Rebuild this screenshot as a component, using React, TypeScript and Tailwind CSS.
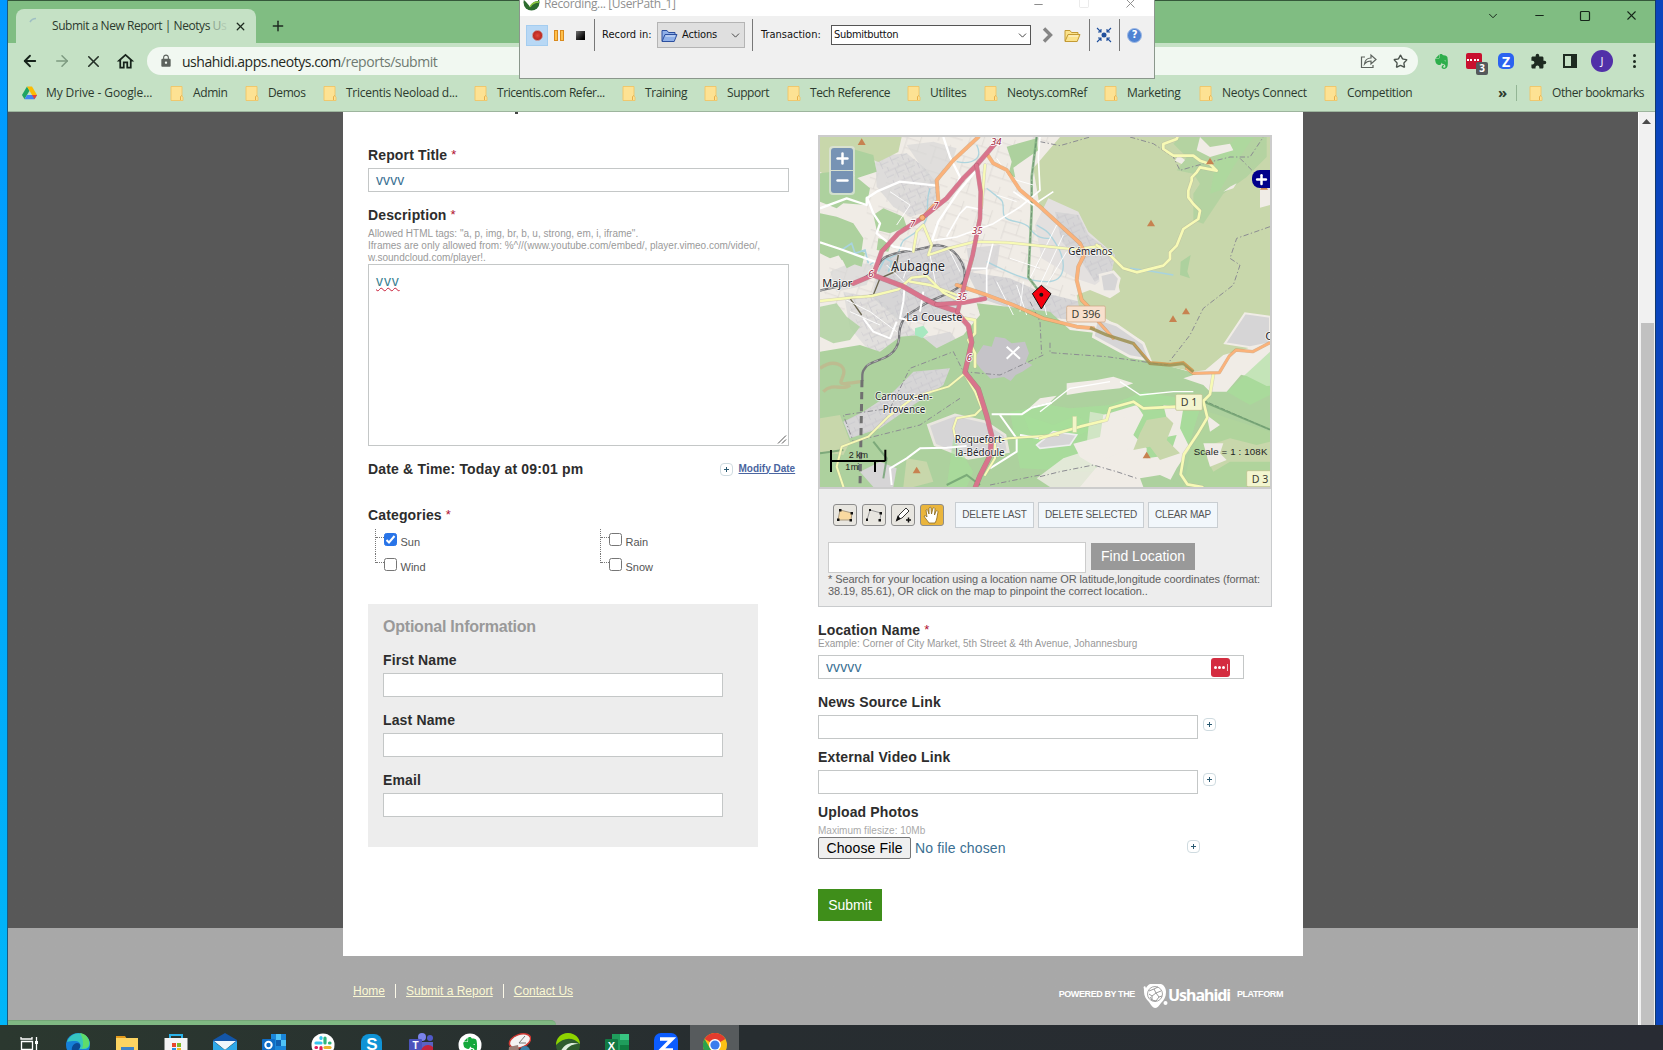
import React from "react";
import { ArrowLeft, ArrowRight, X, Plus, Minus, Square, ChevronDown, Star } from "lucide-react";
import { SiEvernote } from "react-icons/si";
import { MdExtension, MdLock, MdOutlineHome } from "react-icons/md";

const CHROME = "font-['Open_Sans','Noto_Sans',sans-serif]";
const ARIAL = "font-['Liberation_Sans',Arial,sans-serif]";

/* ---------- browser chrome ---------- */

function FolderIcon() {
  return (
    <svg width="14" height="15" viewBox="0 0 14 15" className="shrink-0">
      <path d="M1 .5h11V10l1 1v3.5H1z" fill="#fde293" stroke="#f0c566" strokeWidth=".9" />
      <path d="M10.5 14v-3.5l1.5-1" stroke="#e8b04a" fill="none" />
    </svg>
  );
}

function DriveIcon() {
  return (
    <svg width="15" height="14" viewBox="0 0 15 14" className="shrink-0">
      <path d="M5 .5 0 9l2.5 4.3L7.5 4.8z" fill="#1fa463" />
      <path d="M5 .5h5L15 9h-5z" fill="#fbbc04" />
      <path d="M5 9h10l-2.5 4.3H2.5z" fill="#4285f4" />
      <path d="M15 9h-5l2.5 4.3z" fill="#ea4335" />
    </svg>
  );
}

const BOOKMARKS: [string, string][] = [
  ["My Drive - Google...", "w-[148px] tracking-[-0.1px]"],
  ["Admin", "w-[75px] tracking-[-0.4px]"],
  ["Demos", "w-[78px] tracking-[-0.4px]"],
  ["Tricentis Neoload d...", "w-[151px] tracking-[-0.28px]"],
  ["Tricentis.com Refer...", "w-[148px] tracking-[-0.42px]"],
  ["Training", "w-[82px] tracking-[-0.42px]"],
  ["Support", "w-[83px] tracking-[-0.4px]"],
  ["Tech Reference", "w-[120px] tracking-[-0.42px]"],
  ["Utilites", "w-[77px] tracking-[-0.3px]"],
  ["Neotys.comRef", "w-[120px] tracking-[-0.35px]"],
  ["Marketing", "w-[95px] tracking-[-0.35px]"],
  ["Neotys Connect", "w-[125px] tracking-[-0.26px]"],
  ["Competition", "w-[120px] tracking-[-0.35px]"],
];

function BrowserChrome() {
  return (
    <header className={`h-[112px] shrink-0 bg-[#c5e1c5] text-[#2c3a2e] ${CHROME}`}>
      <div className="flex h-[43px] items-end border-t border-[#35583a] bg-[#80bd82]">
        <div className="ml-2 flex h-[34px] w-[240px] items-center rounded-t-lg bg-[#c5e1c5] pl-3">
          <svg width="16" height="16" viewBox="0 0 16 16" className="-mt-1">
            <path d="M2 6a7 7 0 0 1 6-3.5" fill="none" stroke="#9fbfc4" strokeWidth="1.6" />
          </svg>
          <span className="ml-2 w-[176px] text-[12px] tracking-[-0.45px] whitespace-nowrap">
            Submit a New Report | Neotys <span className="text-[#8fa892]">U<span className="text-[#b0c9b1]">s</span></span>
          </span>
          <X size={13} strokeWidth={2.4} className="ml-1.5 shrink-0 text-[#1e2a20]" />
        </div>
        <Plus size={16} strokeWidth={2.2} className="mb-[9px] ml-[14px] text-[#1e2a20]" />
        <div className="mb-[20px] ml-auto flex items-center gap-[33px] pr-[16px] text-[#16261a]">
          <ChevronDown size={14} strokeWidth={1.7} />
          <Minus size={13} strokeWidth={2} />
          <Square size={12} strokeWidth={2.4} />
          <X size={15} strokeWidth={1.7} />
        </div>
      </div>
      <div className="flex h-[36px] items-center pl-[13px]">
        <ArrowLeft size={18} strokeWidth={2.4} className="text-[#16221a]" />
        <ArrowRight size={18} strokeWidth={2} className="ml-[14px] text-[#7d9a80]" />
        <X size={19} strokeWidth={2} className="ml-[13px] text-[#243027]" />
        <MdOutlineHome size={21} className="ml-[12px] text-[#16221a]" />
        <div className="ml-[11px] flex h-[28px] w-[1271px] items-center rounded-full bg-[#f1f8f1] pl-[12px] text-[14px] tracking-[-0.47px]">
          <MdLock size={14} className="text-[#5c625d]" />
          <span className="ml-[9px] text-[#1f2821]">ushahidi.apps.neotys.com</span>
          <span className="text-[#6f7a71]">/reports/submit</span>
          <svg width="17" height="16" viewBox="0 0 17 16" className="ml-auto" fill="none" stroke="#5c625d" strokeWidth="1.2">
            <path d="M5 4H1.500v10.500H13V12M4.500 11c.5-4 3-6 6.500-6V2l5 4.500-5 4.500V8c-3 0-5 1-6.500 3z" />
          </svg>
          <Star size={15} strokeWidth={2.2} className="mr-[10px] ml-[16px] text-[#4c544e]" />
        </div>
        <SiEvernote size={15} className="ml-[16px] text-[#2dae4b]" />
        <div className="relative ml-[17px] size-[16px] rounded-[2px] bg-[#c8102e]">
          <div className="mt-[6px] ml-[1px] w-[12px] border-t-2 border-dotted border-white" />
          <span className="absolute top-[9px] left-[10px] flex h-[13px] w-[12px] items-center justify-center rounded-[2px] bg-[#55595b] text-[10px] font-bold text-white">3</span>
        </div>
        <div className="ml-[16px] flex size-[16px] items-center justify-center rounded-[5px] bg-[#2b63f0] text-[14px] font-bold text-white">Z</div>
        <MdExtension size={17} className="ml-[16px] text-[#1d2a20]" />
        <div className="ml-[16px] flex h-[14px] w-[14px] justify-end border-2 border-[#1d2a20]">
          <div className="h-full w-[4px] bg-[#1d2a20]" />
        </div>
        <div className="ml-[14px] flex size-[22px] items-center justify-center rounded-full bg-[#5130a8] text-[11px] text-white">J</div>
        <div className="ml-[20px] flex flex-col gap-[2.5px]">
          <i className="size-[3px] rounded-full bg-[#1d2a20]" />
          <i className="size-[3px] rounded-full bg-[#1d2a20]" />
          <i className="size-[3px] rounded-full bg-[#1d2a20]" />
        </div>
      </div>
      <div className="flex h-[33px] items-center border-b border-[#9db59e] pb-[4px] pl-[14px] text-[12px] whitespace-nowrap">
        {BOOKMARKS.map(([name, cls], i) => (
          <div key={name} className={`flex shrink-0 items-center ${cls}`}>
            {i === 0 ? <DriveIcon /> : <FolderIcon />}
            <span className="ml-[9px]">{name}</span>
          </div>
        ))}
        <span className="-mt-[2px] ml-[54px] w-[18px] text-[15px] leading-none font-bold">»</span>
        <div className="h-[16px] w-px bg-[#93b595]" />
        <div className="ml-[12px] flex items-center tracking-[-0.43px]">
          <FolderIcon />
          <span className="ml-[9px]">Other bookmarks</span>
        </div>
      </div>
    </header>
  );
}

/* ---------- floating recorder toolbar ---------- */

function OpenFolder({ fill, dark }: { fill: string; dark: string }) {
  return (
    <svg width="17" height="15" viewBox="0 0 17 15" className="shrink-0">
      <path d="M1 13V2.500h5l1.500 2H14V7" fill={fill} stroke={dark} />
      <path d="M1 13.500 4 6.500h12l-2.800 7z" fill={fill} stroke={dark} />
      <path d="M4.500 8h9.500" stroke="#fff" opacity=".7" />
    </svg>
  );
}

function Recorder() {
  return (
    <div className="absolute top-0 left-[519px] z-10 h-[79px] w-[636px] border border-t-0 border-[#8b978c] bg-[#f0f0f0] font-['DejaVu_Sans_Condensed','DejaVu_Sans',sans-serif] text-[11px] text-[#111]">
      <div className="flex h-[16px] items-start bg-white">
        <svg width="17" height="11" viewBox="0 0 17 11" className="ml-[3px] shrink-0">
          <circle cx="8.5" cy="2.5" r="8" fill="#2c6b2f" />
          <path d="M1 0c3 3 5 5 6 7 1-3 4-6 8-6v-2H1z" fill="#fff" />
          <path d="M7 7c2-4 5-5 9-5" stroke="#8cc63f" fill="none" strokeWidth="1.5" />
        </svg>
        <span className={`-mt-[4px] ml-[4px] text-[12px] leading-[15px] tracking-[-0.35px] text-[#8f8f8f] ${CHROME}`}>Recording... [UserPath_1]</span>
        <div className="mr-[16px] ml-auto flex gap-[33px] text-[#8a8a8a]">
          <Minus size={13} strokeWidth={1.8} className="-mt-[2px]" />
          <Square size={12} strokeWidth={1.2} className="-mt-[3px] text-[#ddd]" />
          <X size={15} strokeWidth={1.5} className="-mt-[4px]" />
        </div>
      </div>
      <div className="flex h-[38px] items-center pl-[6px]">
        <div className="flex h-[21px] w-[22px] items-center justify-center border border-[#a4cdf0] bg-[#b8d8f5]">
          <div className="size-[11px] rounded-full border border-[#c78a86] bg-radial from-[#e0483a] to-[#a80f10]" />
        </div>
        <div className="ml-[6px] flex gap-[2px]">
          <i className="h-[11px] w-[4px] border border-[#d98a1e] bg-[#ffc04a]" />
          <i className="h-[11px] w-[4px] border border-[#d98a1e] bg-[#ffc04a]" />
        </div>
        <div className="ml-[12px] size-[9px] bg-linear-to-br from-[#777] to-black" />
        <div className="ml-[9px] h-[32px] w-px bg-[#777]" />
        <span className="ml-[7px] w-[55px]">Record in:</span>
        <div className="flex h-[26px] w-[88px] items-center border border-[#b4b4b4] bg-[#dfdfdf] pl-[3px]">
          <OpenFolder fill="#8fb0e8" dark="#2c4f9e" />
          <span className="ml-[4px] tracking-[-0.15px]">Actions</span>
          <ChevronDown size={13} strokeWidth={1.8} className="mr-[2px] ml-auto text-[#444]" />
        </div>
        <div className="ml-[7px] h-[32px] w-px bg-[#777]" />
        <span className="ml-[8px] w-[70px]">Transaction:</span>
        <div className="flex h-[20px] w-[200px] items-center justify-between border border-[#555] bg-white pr-[1px] pl-[2px]">
          <span className="tracking-[-0.3px]">Submitbutton</span>
          <ChevronDown size={13} strokeWidth={1.8} className="text-[#444]" />
        </div>
        <svg width="11" height="16" viewBox="0 0 11 16" className="ml-[11px]">
          <path d="M2 1.500 8.500 8 2 14.500" fill="none" stroke="#858585" strokeWidth="3.4" />
        </svg>
        <div className="ml-[11px]"><OpenFolder fill="#fbe28a" dark="#c39a34" /></div>
        <div className="ml-[8px] h-[32px] w-px bg-[#777]" />
        <svg width="16" height="16" viewBox="0 0 16 16" className="ml-[6px]" fill="none" stroke="#1f4f9c" strokeWidth="1.1">
          <circle cx="8" cy="8" r="2.5" fill="#1f4f9c" stroke="none" />
          <path d="M1 1l4 4M5 2v3H2M15 1l-4 4M11 2v3h3M1 15l4-4M2 11h3v3M15 15l-4-4M14 11h-3v3" />
        </svg>
        <div className="ml-[7px] h-[32px] w-px bg-[#777]" />
        <div className="ml-[7px] flex size-[15px] items-center justify-center rounded-full border border-[#9db8e4] bg-[#4f83d3] text-[11px] font-bold text-white">?</div>
      </div>
    </div>
  );
}

/* ---------- map ---------- */

const FOREST = "#add19e";
const SCRUB = "#c8d7ab";
const GRASS = "#a6e09a";
const TOWN = "#d6d5d6";

function Road({ d, c, w, k = "#b9b39a" }: { d: string; c: string; w: number; k?: string }) {
  return (
    <g fill="none" strokeLinejoin="round" strokeLinecap="round">
      <path d={d} stroke={k} strokeWidth={w + 3} opacity=".5" />
      <path d={d} stroke={c} strokeWidth={w} />
    </g>
  );
}

function Place({ x, y, w, s, children }: { x: number; y: number; w: number; s: number; children: string }) {
  return (
    <text x={x} y={y} textLength={w} lengthAdjust="spacingAndGlyphs" fontSize={s} fill="#26262b" stroke="#fff" strokeWidth="5" strokeOpacity=".75" paintOrder="stroke">
      {children}
    </text>
  );
}

function Peak({ x, y }: { x: number; y: number }) {
  return <path d={`M${x} ${y - 10}l12 20h-24z`} fill="#c78250" />;
}

function Shield({ x, y, w, t, o }: { x: number; y: number; w: number; t: string; o?: boolean }) {
  return (
    <g>
      <rect x={x} y={y} width={w} height="48" rx="4" fill={o ? "#f8e0cd" : "#f3f5cf"} stroke={o ? "#c9a27f" : "#b9bc8a"} strokeWidth="2" />
      <text x={x + w / 2} y={y + 36} textAnchor="middle" fontSize="32" fill="#3d3d33">{t}</text>
    </g>
  );
}

function MapView() {
  const yellow = "#f7fab5";
  const mw = "#d9748c";
  const org = "#fbb27a";
  return (
    <svg width="450" height="350" viewBox="30 36 1350 1050" className="block font-['Noto_Sans',sans-serif]">
      <defs>
        <pattern id="lots" width="34" height="42" patternUnits="userSpaceOnUse" patternTransform="rotate(-24)">
          <path d="M0 12h34M10 12v30M24 0v12M10 28h24" stroke="#c2c1c8" strokeWidth="1.5" fill="none" />
        </pattern>
        <pattern id="fields" width="90" height="74" patternUnits="userSpaceOnUse" patternTransform="rotate(18)">
          <path d="M0 20h60M60 0v50M20 50h70M20 20v54" stroke="#d2cdc9" strokeWidth="1.5" fill="none" />
        </pattern>
      </defs>
      <rect x="30" y="36" width="1350" height="1050" fill="#f0ece6" />
      {/* farmland and built-up areas */}
      <path d="M190 36H730L720 170 850 350 780 560 520 530 440 660 180 640 90 560 40 500 60 420 160 380z" fill="url(#fields)" />
      <path d="M195 95l95-10 50 40 50 60-20 70-70 20-50-30-50-60z" fill={TOWN} opacity=".7" />
      <path d="M290 60l80-10 70 20-20 60-50 50-40-60zM60 440l70-30 60 10-20 60-90 20z" fill={TOWN} opacity=".6" />
      <path d="M215 395l170-40 80 60 10 90-60 80-150 0-80-70z" fill={TOWN} />
      <path d="M470 440l130 20 90 40 120 30 20 60-170-20-150-50z" fill={TOWN} />
      <path d="M470 370l100-10-10 70-80 10zM720 60l40 60-30 60-12-40zM330 640l90-20 40 50-60 60-100-20z" fill={TOWN} opacity=".8" />
      <path d="M100 500l100 20 70 50 60 70-60 60-90-20-60-70z" fill={TOWN} opacity=".55" />
      <path d="M195 95l95-10 50 40 50 60-20 70-70 20zM215 395l170-40 80 60 10 90-60 80-150 0zM470 440l130 20 90 40 120 30 20 60-170-20zM100 500l100 20 70 50 60 70-60 60-90-20z" fill="url(#lots)" />
      {/* northern and western woods */}
      <path d="M30 36h245l-10 45-60 30-50-20-20 60-60 10-45-20z" fill={SCRUB} />
      <path d="M30 145l80-10 40 30 30 25-10 50-70-5-20 15-50-20zM120 70l70 20 10 50-60 20-30-40zM190 270l30-20 60 25 10 30-50 20-40-10z" fill={FOREST} />
      <path d="M30 265l50 10 50 20 30 45-10 70-40 20-20-40-30 10-30-15zM55 345l60 10 50 30-10 40-60-20zM205 340l40 10-10 30-35-5z" fill={FOREST} />
      <path d="M590 65l90-25 10 90-10 80-35-10-20-40-30-10 10-40zM640 200l40-10 10 60-30 10z" fill={FOREST} />
      <path d="M30 545l50-10 30 40 40 30-30 40-50 10-40-20z" fill={FOREST} opacity=".8" />
      {/* southern forest */}
      <path d="M30 680l120-20 60 20 60-45 60-5 50 40 80-40 50-60-10-35 220 25 60 55 130 15 60 20 120 5 20 60 110 18 90 20 60 30 110-10 110-50V1086H30z" fill={FOREST} />
      {/* eastern scrub */}
      <path d="M742 36H1380V690l-120 48-110 5-110-30-30-40-80-45-60-40-50-40 20-30 40-20-20-60-120-60-100-100-30-150z" fill="#f0ece6" />
      <path d="M750 36H1380V655l-60 10-60 60-110 15-140-30-10-60-130-80-60-10-10-50 40-15 60 25 30-20-10-40-40-20-30-40-20-30-20-70-60-30-60-20-20-120z" fill={SCRUB} />
      <path d="M1110 36h260v60l-60 60-70 50-60 90-30-10 0-80 20-30-20-30-50-10 30-40-40-40z" fill={FOREST} opacity=".75" />
      <path d="M1220 100l60-64h50l-60 90-40 70-30 10z" fill={GRASS} opacity=".4" />
      <path d="M1170 36l30 30 60-10 10 20-70 20-40-20zM1105 90l20 15-10 12-20-10zM1260 185l20-10-10 15-30 10zM1350 190l30-10v60l-30 8z" fill="#f0ece6" />
      <path d="M1112 410l30-20-10 50 8 20-30-10z" fill={FOREST} />
      {/* Gémenos */}
      <path d="M715 220l90 40 30 60 80 70-10 50-50 40-60-20-100-60-20-100z" fill="#e3e0df" />
      <path d="M735 260l70 10 30 60 80 60-10 50-50 30-40-60-60-60z" fill={TOWN} />
      <path d="M735 260l70 10 30 60 80 60-10 50-50 30-40-60-60-60z" fill="url(#lots)" />
      <path d="M870 450l40-10 18 20-10 40-40 0zM860 580l60 20 80 55 20 50-60-10-110-60z" fill={TOWN} stroke="#f0ece6" strokeWidth="8" />
      <path d="M1245 655l60-90 75 10v80l-60 12z" fill={TOWN} stroke="#f0ece6" strokeWidth="6" />
      {/* clearings and villages in the south */}
      <path d="M500 690l20-30 25 5 10-30 30 5 20 15 40-5 12 35-10 25 20 10-30 20-20 10-15 18-20-12-40 5-30-30-15-20z" fill="#c5c3c8" />
      <path d="M590 665l40 36M628 665l-38 36" stroke="#fff" strokeWidth="6" />
      <path d="M100 890l60-30 90-60 60-60 110-10-20 50-90 60-100 70-90 30z" fill={TOWN} />
      <path d="M100 890l60-30 90-60 60-60 110-10-20 50-90 60-100 70-90 30z" fill="url(#lots)" />
      <path d="M355 900l80-30 90 20 60 40 10 50-120 20-100-40z" fill={TOWN} stroke="#e9e6df" strokeWidth="8" />
      <path d="M150 1040l60-30 50 20-10 56h-60z" fill={TOWN} />
      <path d="M30 730c40-30 80-10 70 20s-20 30 50 20M40 800c30-30 60 0 80-20" stroke="#c3b38a" strokeWidth="10" fill="none" opacity=".7" />
      <path d="M30 880l60-10 30 80-20 40-70-10zM290 1000l60 10 20 60-60 16h-30z" fill={SCRUB} />
      <path d="M315 610l25-8 15 20-18 18-22-10z" fill="#a8e8c0" />
      <path d="M600 860l120-20 60 10 120-10 100-40 110 20 60 30-30 100-60 50-100 20-150 20-200-10z" fill={GRASS} opacity=".65" />
      <path d="M640 870l90 30 70-30 50 40-80 40-100 0zM430 940l60 100-20 46h-60z" fill={GRASS} opacity=".6" />
      <path d="M770 775l90-10 50-10 60 20-40 15-100 10-60 10zM690 820l50-8-20 20-60 15z" fill="#f0ece6" />
      <path d="M880 870l100-30 20 30-30 60 40 40 0 30 70-10 20-60-50 10-20-30 40-30-10-40 60 10-10 60 30 60-40 60-30 56-260 0 50-60-50-30-20-40 80-20z" fill="#f0ece6" />
      <path d="M840 860l-10 100 60 40 90-40-30-80z" fill="#f0ece6" opacity=".55" />
      <path d="M1010 885l60-10 20 20-20 50 40 40-60 20-30-40-50 10 20-50z" fill={SCRUB} />
      <path d="M680 960l50-40 70 10-20 30-90 10z" fill={TOWN} stroke="#eee" strokeWidth="5" />
      <path d="M680 1060l80-60 60-20 40 50-20 56h-120z" fill="#f0ece6" opacity=".8" />
      <path d="M990 1060l60-10 80 36h-130z" fill={FOREST} />
      <path d="M1180 740l60-50 110-30-40 70-60 70-50 0-20-20-60-20z" fill="#f0ece6" />
      <path d="M1250 800l130-120v130l-60 30z" fill={GRASS} opacity=".6" />
      <path d="M1195 860l185 60v166h-260l20-100z" fill="#b0d49c" />
      <path d="M1200 960l60-20 80 20 40-10v60l-120 0-50 30-20-40z" fill={SCRUB} />
      <path d="M1180 955l60 0-10 30 20 20-50 20zM1190 870l40 30-30 20z" fill="#f0ece6" />
      {/* water */}
      <path d="M530 190c50 40 50 30 50 70s60 20 80 50 40 30 60 30M500 60c20 40-10 60-60 50M360 190c-20 60 10 80-30 120s-50 20-60 60-80 30-90 50M530 410c60 30 120 60 180 60s60-60 30-110-30-40-60-60" fill="none" stroke="#9fd0dc" strokeWidth="4" opacity=".8" />
      <path d="M95 375l30-20 10 30 30-10 10 40M960 430l60 8 70 12M205 440l20-40 20 10-10 30" fill="none" stroke="#a8d3de" strokeWidth="5" />
      {/* railway and boundaries */}
      <path d="M30 497c80-20 140-20 180-85 20-35 100-30 160-50 60-10 105 60 92 105-20 40-100 50-140 85-40 20-55 40-55 90-10 70-90 60-100 85-12 15-10 20-10 40" fill="none" stroke="#77777a" strokeWidth="7" />
      <path d="M30 497c80-20 140-20 180-85 20-35 100-30 160-50 60-10 105 60 92 105-20 40-100 50-140 85-40 20-55 40-55 90-10 70-90 60-100 85" fill="none" stroke="#d5d5d5" strokeWidth="2" strokeDasharray="14 10" />
      <path d="M156 765l-6 320" stroke="#707070" strokeWidth="9" strokeDasharray="22 14" />
      <path d="M265 390l-10 50-45 20-20 50-70 10 35 50" fill="none" stroke="#6b6650" strokeWidth="4" />
      <path d="M680 36l-15 120 0 100-10 200 45 60" fill="none" stroke="#7eb07e" strokeWidth="8" opacity=".8" />
      <path d="M680 36l-15 120 0 100-10 200 45 60M1180 826l200 88" fill="none" stroke="#6b8f70" strokeWidth="2.5" strokeDasharray="14 5" />
      <path d="M30 985l70-10M190 950l40 50-10 60M410 1080l60-30 40 30M1180 830l200 84" fill="none" stroke="#6f9f70" strokeWidth="6" opacity=".8" />
      <g fill="none" stroke="#8c8c92" strokeWidth="3" strokeDasharray="16 7 4 7">
        <path d="M690 50l60 12 90-26M960 36l70 20 60 40 20 40 70-20 80-20 60 0 40-60M1290 100l40 40" />
        <path d="M1380 305l-100 35-20 60 30 20-20 60-90 70-40 80-70 90-180-25-170-12 0-30" />
        <path d="M700 690l-130 60-110-10-30-60-130 50-60 120-140 20 30 80 200-50 120-80" />
        <path d="M660 530l30 60 5 100M690 1055l60-15 100-20 70 20 60 20M540 1080l150-30" />
      </g>
      {/* minor roads */}
      <g fill="none" stroke="#fff" strokeWidth="7" strokeLinejoin="round">
        <path d="M30 250l80-30 60 20 0-20 30-20 70-30 110 12M170 215l20 50 20 30-10 30 50 40 60 10M30 352l60 20 110 40M400 36l20 60 30 60-15 40M365 350l20-60 60-90 50-60" />
        <path d="M690 36l-5 60 5 100-60 50-80 50-110 40-70 10M520 255l-50-10-20 20-40 70M550 350l-20 80M480 430h50l0 90M610 200l60 40 60-40" strokeWidth="5" />
        <path d="M285 470l-5 60-10 50 50 10M340 500l-10 60M160 580l30 40 50 20 20-50M245 1080l-5-50 50-30 40-30 80-2 60-5M545 868l90 0 30-20 60-15M570 870l50 70 0 40-80 50M690 940l-60-10" strokeWidth="6" />
        <path d="M690 860l90-70 120-20M930 770l60 40 100-10 60 0" strokeWidth="4" />
      </g>
      <g fill="none" stroke="#fff" strokeWidth="3" opacity=".9">
        <path d="M560 100l40 60 70 20M560 210l60 20M740 300l-80 160M760 330l-70 150M770 380l-60 100M600 400l90 30M560 470l50 100M620 480l30 90M420 380l30 60M260 300l40-60-60-40M100 520l80 40 80 60M120 560l90 40M230 420l60 60M300 400l-20 60M360 390l20 100M640 470l-10 90M690 490l20 80" />
      </g>
      {/* secondary roads */}
      <Road c={yellow} w={7} d="M30 528l95-10 60-5 80-20 40-35 45-5 50 50 40 20M310 380l10-60 20-20 25 60-10 30M355 390l60-20 80-20 100 3 200 20 75-10M525 120l-10 120-30 170-25 80M300 470l60 10 80 30" />
      <Road c={yellow} w={6} d="M465 745l-50 40-100 30-80 60-60 60-80 30-15 60 20 60M465 750l30 50 20 50-20 20-55 10-10 30 5 25 100 20 60-15 150-10M525 1050l30-50 0-60" />
      <Road c={yellow} w={8} d="M690 940l120-35 80-20 10-35 70-20 30 20 100-5M860 360l40 30 40 40 40 12 80-20 20-20 0-20 20-20 20-50 45-30 5-25-20-20-15-20 0-20 10-30 0-10 15-15 10-15 50 10-20-20-30-10-20-15-60 0-30-20 0-15 40-15 20-55-10-5h65" />
      <Road c={yellow} w={8} d="M1210 748l-10 60-20 20 12 50-30 50-40 60-10 60 20 30 45 8M465 580l30 5 0 40-20 20 20 40 0 40" />
      {/* primary roads */}
      <Road c={org} w={9} k="#c2803f" d="M505 36l-75 70-50 60 5 60-45 50M530 85l20 30 40 20 40 60 60 50 120 110 15 30-20 40-5 40 15 60 20 20M440 480l90 30 80 30 90 40 100 25 50 5" />
      <Road c={org} w={7} k="#c2803f" d="M865 590l45 50M1130 730l20 15 78-2 30-50 20-18 50 5 50-26" />
      <path d="M840 608l50 22 80 25 50 60 60 5 40-5 30 25" fill="none" stroke="#9c8f50" strokeWidth="10" opacity=".85" />
      <path d="M970 655l50 55 60 5 40-5 30 25" fill="none" stroke="#d89a50" strokeWidth="4" opacity=".8" />
      {/* motorways */}
      <Road c={mw} w={12} k="#a04860" d="M560 50l-60 70-40 40-50 60-75 60-70 45-50 55-25 70-60 25" />
      <Road c={mw} w={13} k="#a04860" d="M195 452l80 30 70 40 30 15 60 20 40 45 10 50-20 90 40 50 25 80 15 60-5 60-30 60-15 38" />
      <Road c={mw} w={11} k="#a04860" d="M500 120l12 80-2 80-22 110-25 90-20 80M380 538l80-5 65-12" />
      <circle cx="337" cy="278" r="8" fill={org} stroke="#c2803f" strokeWidth="2" />
      {([["34", 543, 60], ["7", 370, 253], ["7", 300, 305], ["35", 486, 326], ["6", 175, 457], ["35", 440, 526], ["6", 470, 708]] as [string, number, number][]).map(([t, x, y], i) => (
        <text key={i} x={x} y={y} fontSize="28" fontStyle="italic" fill="#9a1838" stroke="#fff" strokeWidth="5" paintOrder="stroke">{t}</text>
      ))}
      <Peak x={155} y={50} /><Peak x={1023} y={294} /><Peak x={1128} y={558} /><Peak x={1089} y={581} />
      <Peak x={1200} y={108} /><Peak x={320} y={1035} /><Peak x={1010} y={990} /><Peak x={1362} y={184} />
      <Place x={243} y={438} w={162} s={41}>Aubagne</Place>
      <Place x={37} y={485} w={90} s={32}>Major</Place>
      <Place x={289} y={588} w={168} s={32}>La Coueste</Place>
      <Place x={775} y={390} w={132} s={31}>Gémenos</Place>
      <Place x={195} y={825} w={172} s={31}>Carnoux-en-</Place>
      <Place x={218} y={863} w={128} s={31}>Provence</Place>
      <Place x={434} y={954} w={150} s={31}>Roquefort-</Place>
      <Place x={436} y={993} w={148} s={31}>la-Bédoule</Place>
      <Place x={1366} y={646} w={22} s={31}>C</Place>
      <Shield x={770} y={543} w={116} t="D 396" o />
      <Shield x={1097} y={808} w={80} t="D 1" />
      <Shield x={1310} y={1037} w={80} t="D 3" />
      <rect x="788" y="874" width="12" height="48" fill="#f3f5c8" stroke="#c9cc9a" />
      {/* marker */}
      <path d="M694 481l29 25-29 46-27-46z" fill="#f5000f" stroke="#111" strokeWidth="3" />
      <circle cx="694" cy="509" r="6" fill="#111" />
      {/* scale bar */}
      <path d="M63 975v66M63 1008h163M226 974v34M195 1010v31" stroke="#000" strokeWidth="6" fill="none" />
      <g className="font-['Liberation_Sans',sans-serif]" fill="#222">
        <text x="116" y="999" fontSize="27" textLength="58">2 km</text>
        <text x="106" y="1035" fontSize="27" textLength="42">1 mi</text>
        <text x="1151" y="990" fontSize="29" textLength="221">Scale = 1 : 108K</text>
      </g>
    </svg>
  );
}

/* ---------- form pieces ---------- */

function Label({ children, req, cls }: { children: string; req?: boolean; cls: string }) {
  return (
    <div className={`flex shrink-0 items-center text-[14px] leading-[16px] font-bold tracking-[0.14px] text-[#2d2d2d] ${cls}`}>
      <span>{children}</span>
      {req && <span className="ml-[4px] text-[13px] font-normal text-[#b01030]">*</span>}
    </div>
  );
}

function Field({ cls, children }: { cls: string; children?: React.ReactNode }) {
  return (
    <div className={`flex h-[24px] shrink-0 items-center border border-[#c4c7c7] bg-white text-[14px] text-[#3a6f92] ${cls}`}>{children}</div>
  );
}

function AddIcon() {
  return (
    <span className="flex size-[13px] shrink-0 items-center justify-center rounded-[4px] border border-[#cfdbe0] text-[#2a5a72]">
      <svg width="5" height="5" viewBox="0 0 5 5"><path d="M2.500 0v5M0 2.500h5" stroke="currentColor" /></svg>
    </span>
  );
}

function Check({ label, on, last }: { label: string; on?: boolean; last?: boolean }) {
  return (
    <div className="flex h-[25px] text-[11px] text-[#555]">
      <div className={`w-[9px] border-l border-dotted border-[#777] ${last ? "h-[9px]" : "h-[25px]"}`}>
        <div className="h-[9px] border-b border-dotted border-[#777]" />
      </div>
      <div className={`mt-[4px] flex size-[13px] items-center justify-center rounded-[2.5px] border ${on ? "border-[#2874e8] bg-[#2874e8]" : "border-[#767676] bg-white"}`}>
        {on && <svg width="11" height="11" viewBox="0 0 11 11"><path d="M1.500 6l2.500 2.500L9.500 2" stroke="#fff" strokeWidth="2" fill="none" /></svg>}
      </div>
      <span className="mt-[5px] ml-[3.5px] leading-[16px]">{label}</span>
    </div>
  );
}

function LeftColumn() {
  return (
    <div className="flex w-[450px] shrink-0 flex-col pt-[35px]">
      <Label req cls="h-[16px]">Report Title</Label>
      <Field cls="mt-[5px] w-[421px] pl-[7px]"><span className="tracking-[0.1px]">vvvv</span></Field>
      <Label req cls="mt-[15px] h-[16px]">Description</Label>
      <div className="mt-[5px] text-[10px] leading-[12px] whitespace-nowrap text-[#9a9a9a]">
        <p>Allowed HTML tags: "a, p, img, br, b, u, strong, em, i, iframe".</p>
        <p>Iframes are only allowed from: %^//(www.youtube.com/embed/, player.vimeo.com/video/,</p>
        <p>w.soundcloud.com/player!.</p>
      </div>
      <div className="flex h-[182px] w-[421px] shrink-0 items-start justify-between border border-[#c4c7c7] pl-[7px]">
        <span className="mt-[8px] text-[14px] leading-[16px] tracking-[0.9px] text-[#3a7f92] underline decoration-[#c8203a] decoration-wavy decoration-1 underline-offset-[1px]">vvv</span>
        <svg width="10" height="10" viewBox="0 0 10 10" className="mr-px mb-px self-end"><path d="M1 9.500 9 1.500M5 9.500l4-4" stroke="#555" /></svg>
      </div>
      <div className="mt-[15px] flex h-[16px] items-center">
        <Label cls="w-[352px] tracking-[0.17px]">Date &amp; Time: Today at 09:01 pm</Label>
        <AddIcon />
        <span className="-mt-[2px] ml-[5.5px] text-[10px] font-bold whitespace-nowrap text-[#4a65a0] underline">Modify Date</span>
      </div>
      <Label req cls="mt-[30px] h-[16px]">Categories</Label>
      <div className="mt-[6px] flex h-[50px] shrink-0 pl-[7px]">
        <div className="w-[225px]">
          <Check label="Sun" on />
          <Check label="Wind" last />
        </div>
        <div>
          <Check label="Rain" />
          <Check label="Snow" last />
        </div>
      </div>
      <div className="mt-[25px] flex h-[243px] w-[390px] shrink-0 flex-col bg-[#ededed] pl-[15px]">
        <p className="mt-[14px] h-[18px] text-[16px] leading-[18px] font-bold tracking-[-0.22px] text-[#999]">Optional Information</p>
        <Label cls="mt-[16px] h-[16px]">First Name</Label>
        <Field cls="mt-[5px] w-[340px]" />
        <Label cls="mt-[15px] h-[16px]">Last Name</Label>
        <Field cls="mt-[5px] w-[340px]" />
        <Label cls="mt-[15px] h-[16px]">Email</Label>
        <Field cls="mt-[5px] w-[340px]" />
      </div>
    </div>
  );
}

function Tool({ on, children }: { on?: boolean; children: React.ReactNode }) {
  return (
    <div className={`flex h-[22px] w-[24px] items-center justify-center rounded-[3px] border border-[#8d8d8d] ${on ? "bg-[#eab53c]" : "bg-[#e8e6e0]"}`}>
      <svg width="20" height="18" viewBox="0 0 20 18" fill="none" stroke="#333">{children}</svg>
    </div>
  );
}

function RightColumn() {
  return (
    <div className="flex w-[454px] shrink-0 flex-col pt-[23px]">
      <div className="relative shrink-0 border-2 border-[#ccc]">
        <MapView />
        <div className="absolute top-[9px] left-[9px] flex flex-col gap-px rounded-[4px] bg-[#dfe6df]/70 p-[2px] text-white">
          <div className="flex h-[22px] w-[22px] items-center justify-center rounded-t-[3px] bg-[#7793b4] pb-[2px]"><Plus size={17} strokeWidth={3.5} /></div>
          <div className="flex h-[22px] w-[22px] items-center justify-center rounded-b-[3px] bg-[#7793b4] pb-[3px]"><Minus size={17} strokeWidth={3.5} /></div>
        </div>
        <div className="absolute top-[33px] right-0 flex h-[18px] w-[18px] items-center justify-center rounded-l-[8px] bg-[#00008b] text-white">
          <Plus size={15} strokeWidth={4} />
        </div>
      </div>
      <div className="h-[118px] shrink-0 border border-t-0 border-[#c9cbcd] bg-[#ededed] pt-[13px] pl-[9px]">
        <div className="flex items-center gap-[5px] pl-[5px] text-[10px] text-[#555]">
          <Tool>
            <path d="M5 4l12 3-1 7-13 0z" fill="#f9d9a0" stroke="#a99a80" />
            <path d="M4 3h2.500v2.500H4zM15.500 6H18v2.500h-2.500zM14.500 13H17v2.500h-2.500zM2 12.500h2.500V15H2z" fill="#111" stroke="none" />
          </Tool>
          <Tool>
            <path d="M3 14L6 4l11 3-1 7" stroke="#999" />
            <path d="M5 3h2v2H5zM15.500 6H18v2.500h-2.500zM14.500 13H17v2.500h-2.500zM2 12.500h2V15H2z" fill="#111" stroke="none" />
          </Tool>
          <Tool>
            <path d="M4 14l2-5 7-7 3 3-7 7z" fill="#fff" /><path d="M4 14l1-3 1.500 1.500zM13 14h5M15.500 11.500v5" stroke="#111" strokeWidth="1.5" />
          </Tool>
          <Tool on>
            <path d="M7 17c-2-3-4-5-5-7 1-1 2 0 3 1L4 4c1-1 2 0 2 1l1 3V2c1-1 2-1 2 0l.5 6L11 2c1-1 2 0 2 1l-.5 6L14 5c1-1 2 0 2 1-1 4-1 8-3 11z" fill="#fff" stroke="#8a6a20" strokeWidth=".8" />
          </Tool>
          <div className="ml-[6px] flex gap-[4px] whitespace-nowrap">
            <span className="flex h-[26px] w-[79px] items-center justify-center border border-[#c9ced2] bg-[#f2f7fb] pb-px tracking-[-0.22px]">DELETE LAST</span>
            <span className="flex h-[26px] w-[106px] items-center justify-center border border-[#c9ced2] bg-[#f2f7fb] pb-px tracking-[-0.17px]">DELETE SELECTED</span>
            <span className="flex h-[26px] w-[70px] items-center justify-center border border-[#c9ced2] bg-[#f2f7fb] pb-px tracking-[-0.2px]">CLEAR MAP</span>
          </div>
        </div>
        <div className="mt-[14px] flex items-start">
          <div className="h-[31px] w-[258px] border border-[#ccc] bg-white" />
          <div className="mt-px ml-[5px] flex h-[27px] w-[104px] items-center justify-center bg-[#999] text-[14px] text-white">Find Location</div>
        </div>
        <p className="text-[11px] leading-[12px] tracking-[-0.09px] whitespace-nowrap text-[#606060]">
          * Search for your location using a location name OR latitude,longitude coordinates (format:
          <br />
          38.19, 85.61), OR click on the map to pinpoint the correct location..
        </p>
      </div>
      <Label req cls="mt-[15px] h-[16px]">Location Name</Label>
      <p className="h-[12px] text-[10px] leading-[12px] whitespace-nowrap text-[#999]">Example: Corner of City Market, 5th Street &amp; 4th Avenue, Johannesburg</p>
      <Field cls="mt-[5px] w-[426px] justify-between pr-[13px] pl-[7px]">
        <span className="tracking-[0.1px]">vvvvv</span>
        <span className="flex size-[19px] items-center gap-[1px] rounded-[3px] bg-[#d42c40] pl-[3px]">
          <i className="size-[3px] rounded-full bg-white" />
          <i className="size-[3px] rounded-full bg-white" />
          <i className="size-[3px] rounded-full bg-white" />
          <i className="ml-px h-[7px] w-px bg-white/70" />
        </span>
      </Field>
      <Label cls="mt-[15px] h-[16px]">News Source Link</Label>
      <div className="mt-[5px] flex gap-[5px]">
        <Field cls="w-[380px]" />
        <div className="pt-[3px]"><AddIcon /></div>
      </div>
      <Label cls="mt-[10px] h-[16px]">External Video Link</Label>
      <div className="mt-[5px] flex gap-[5px]">
        <Field cls="w-[380px]" />
        <div className="pt-[3px]"><AddIcon /></div>
      </div>
      <Label cls="mt-[10px] h-[16px]">Upload Photos</Label>
      <p className="mt-[5px] h-[12px] text-[10px] leading-[12px] text-[#aaa]">Maximum filesize: 10Mb</p>
      <div className="flex h-[22px] items-center text-[14px] tracking-[0.14px]">
        <span className="flex h-[22px] w-[93px] items-center justify-center rounded-[2px] border border-[#767676] bg-[#efefef] text-black">Choose File</span>
        <span className="ml-[4px] w-[272px] text-[#3a6f92]">No file chosen</span>
        <div className="-mt-[3px]"><AddIcon /></div>
      </div>
      <div className="mt-[30px] flex h-[32px] w-[64px] items-center justify-center bg-[#3f8e1a] text-[14px] text-white">Submit</div>
    </div>
  );
}

function Footer() {
  return (
    <div className="flex h-[69px] w-[960px] items-center pl-[10px] text-[12px]">
      <div className="flex items-center text-[#fbf8d3]">
        <span className="underline">Home</span>
        <i className="mx-[10px] h-[14px] w-px bg-[#fbf8e8]" />
        <span className="underline">Submit a Report</span>
        <i className="mx-[10px] h-[14px] w-px bg-[#fbf8e8]" />
        <span className="underline">Contact Us</span>
      </div>
      <div className="mt-[9px] mr-[20px] ml-auto flex items-center text-[9px] font-bold text-white">
        <span className="tracking-[-0.4px]">POWERED BY THE</span>
        <svg width="26" height="25" viewBox="0 0 26 25" className="ml-[8px]">
          <path d="M7 1h11c3 1 5 4 5 8 0 5-2 8-5 11-2 3-4 5-6 5s-4-3-6-6c-3-3-5-6-5-10 0-2 0-3-.5-5L2 3l1 2c1-2 2-3 4-4z" fill="#fff" />
          <circle cx="12" cy="11" r="7.5" fill="none" stroke="#a8a8a8" />
          <path d="M6 8l5-2 2 4-4 3-3-2M13 10l5-2M13 10l3 4-3 4-4-1v-4M11 6l4-2M16 14l3-1M9 17l-2-3" fill="none" stroke="#8f8f8f" strokeWidth=".9" />
          <circle cx="22.5" cy="20" r="2" fill="#fff" />
        </svg>
        <span className="-ml-[1px] w-[62px] font-['Noto_Sans',sans-serif] text-[16px] leading-[20px] tracking-[-1px]">Ushahidi</span>
        <span className="ml-[7px] tracking-[-0.4px]">PLATFORM</span>
      </div>
    </div>
  );
}

/* ---------- taskbar ---------- */

const APPS: React.ReactNode[] = [
  <g key="0" fill="none" stroke="#fff" strokeWidth="1.3"><path d="M4.500 8.500h11v8h-11zM4 4v2h11V4M4 21v-2h11v2M19.500 4v17" /><path d="M18 8h3v3h-3z" fill="#fff" stroke="none" /></g>,
  <g key="1"><circle cx="12" cy="12" r="12" fill="#1680d8" /><path d="M1 9C4 0 14-2 20 3c5 4 5 11 0 13h-7c3-4 1-8-4-8-3 0-6 0-8 1z" fill="#36c5c0" /><path d="M14 0c8 1 11 9 8 14l-6 2c2-5 1-11-2-16z" fill="#5fdc6a" /><path d="M9 24c-5-5-4-13 2-14 4 0 4 4 2 6z" fill="#0b4a94" /></g>,
  <g key="2"><path d="M1 3h9l2 3H1z" fill="#e39a1c" /><path d="M1 5h22v20H1z" fill="#fcd462" /><path d="M6 14h13v9H6z" fill="#3e83c8" /><path d="M9 17h7v3H9z" fill="#fcd462" /></g>,
  <g key="3"><path d="M6 6V2h12v4" fill="none" stroke="#2ab3ea" strokeWidth="2" /><path d="M.5 5h23v20H.5z" fill="#f4f4f4" /><path d="M8 10h4v4H8z" fill="#e8472c" /><path d="M13 10h4v4h-4z" fill="#7fb82a" /><path d="M8 15h4v4H8z" fill="#2a8fe0" /><path d="M13 15h4v4h-4z" fill="#f6b81c" /></g>,
  <g key="4"><path d="M0 7l12-7 12 7v4H0z" fill="#1356a8" /><path d="M1 8h22L12 17z" fill="#eef6fc" /><path d="M0 8l12 9 12-9v17H0z" fill="#2ea8e8" /></g>,
  <g key="5"><path d="M9 1h15v23H9z" fill="#1a86d9" /><path d="M14 1h5v6h-5zM19 7h5v6h-5z" fill="#4fc3f7" /><path d="M14 7h5v6h-5z" fill="#0f5fb0" /><rect y="6" width="13" height="14" rx="1" fill="#0f6cc4" /><circle cx="6.5" cy="12" r="3.2" fill="none" stroke="#fff" strokeWidth="2" /></g>,
  <g key="6"><circle cx="12" cy="12" r="11.5" fill="#fff" /><g strokeWidth="3.2" strokeLinecap="round"><path d="M5 10h5" stroke="#36c5f0" /><path d="M10 4.500v1" stroke="#36c5f0" /><path d="M14 5v5" stroke="#2eb67d" /><path d="M18.500 10h.5" stroke="#2eb67d" /><path d="M14 14.500h5" stroke="#ecb22e" /><path d="M10 14.500v5M5 14.500h.5" stroke="#e01e5a" /></g></g>,
  <g key="7"><rect x="1" y="1" width="21" height="26" rx="8" fill="#1093d6" /><text x="12" y="17" fontSize="17" fontWeight="700" textAnchor="middle" fill="#fff">S</text></g>,
  <g key="8"><circle cx="13" cy="4" r="4" fill="#7b83eb" /><circle cx="21" cy="5" r="3" fill="#5059c9" /><path d="M9 9h16v15H9z" fill="#5a62c3" /><rect y="6" width="13" height="13" rx="1" fill="#4b53bc" /><text x="6.5" y="16" fontSize="10" fontWeight="700" textAnchor="middle" fill="#fff">T</text><circle cx="19" cy="19" r="7" fill="#c4243c" /></g>,
  <g key="9"><circle cx="12" cy="12" r="11.5" fill="#fff" /><g transform="translate(4 4) scale(.68)" color="#14a83c"><SiEvernote size={24} /></g></g>,
  <g key="10"><ellipse cx="13" cy="8" rx="11" ry="6.5" fill="#f4f4f4" stroke="#cf3a34" strokeWidth="1.5" transform="rotate(-20 13 8)" /><path d="M12 10L18 3M12 10l7 0" stroke="#777" /><path d="M2 14l9-2 2 12H1z" fill="#9b8078" /><circle cx="18" cy="18" r="5" fill="#3b7fa8" /></g>,
  <g key="11"><circle cx="12" cy="12" r="12" fill="#2f5c2e" /><path d="M0 12C0 5 5 0 12 0s12 5 12 11C17 4 8 4 0 12z" fill="#8fd400" /><path d="M4 20c3-8 10-12 19-9-8 0-13 3-16 13z" fill="#dfeedd" /></g>,
  <g key="12"><path d="M7 1h17v24H7z" fill="#1f9d5c" /><path d="M15 1h9v6h-9z" fill="#38c481" /><path d="M15 12h9v6h-9z" fill="#107c41" /><rect y="6" width="13" height="14" rx="1" fill="#127a43" /><text x="6.5" y="17" fontSize="11" fontWeight="700" textAnchor="middle" fill="#fff">X</text></g>,
  <g key="13"><rect width="24" height="26" rx="7" fill="#0b5cff" /><path d="M6 6h12L7 17h12" fill="none" stroke="#fff" strokeWidth="3.5" /></g>,
  <g key="14"><circle cx="12" cy="12" r="12" fill="#fbc116" /><path d="M12 12L1.600 6A12 12 0 0 1 22.400 6z" fill="#e33b2e" /><path d="M1.600 6l7 12L12 24A12 12 0 0 1 1.600 6z" fill="#2ba24c" /><circle cx="12" cy="12" r="6" fill="#fff" /><circle cx="12" cy="12" r="4.6" fill="#3b7ded" /></g>,
];

function Taskbar() {
  return (
    <div className={`flex h-[25px] shrink-0 overflow-hidden bg-linear-to-r from-[#2b382f] via-[#272d30] via-45% to-[#282b33] pl-[4px] ${ARIAL}`}>
      {APPS.map((g, i) => (
        <div key={i} className={`flex w-[49px] justify-center pt-[8px] ${i === 14 ? "bg-[#575b5d]" : ""}`}>
          <svg width="24" height="24" viewBox="0 0 24 24" className="shrink-0">{g}</svg>
        </div>
      ))}
    </div>
  );
}

export default function App() {
  return (
    <div className={`relative flex h-[1050px] w-[1663px] flex-col overflow-hidden ${ARIAL}`}>
      <div className="flex h-[1025px]">
        <div className="w-[8px] shrink-0 border-r border-[#1c5a80] bg-linear-to-b from-[#0098ff] to-[#00b6f8]" />
        <div className="flex w-[1647px] flex-col">
          <BrowserChrome />
          <div className="flex h-[913px]">
            <div className="relative flex w-[1630px] flex-col items-center bg-linear-to-b from-[#585858] from-[816px] to-[#a8a8a8] to-[816px]">
              <div className="w-[960px]">
                <main className="flex h-[844px] bg-white pl-[25px]">
                  <LeftColumn />
                  <RightColumn />
                </main>
                <Footer />
              </div>
              <div className="absolute top-0 left-[507px] h-[2px] w-[3px] bg-[#444]" />
              <div className="absolute bottom-0 left-0 h-[5px] w-[548px] rounded-tr-[5px] border-t border-[#74a577] bg-[#80b883]" />
            </div>
            <div className="flex w-[17px] flex-col items-center border-l border-white bg-[#f1f1f1]">
              <svg width="9" height="5" viewBox="0 0 9 5" className="mt-[7px] mr-px"><path d="M4.500 0 9 5H0z" fill="#4a4a4a" /></svg>
              <div className="mt-[199px] w-[13px] flex-1 bg-[#c1c1c1]" />
            </div>
          </div>
        </div>
        <div className="w-[8px] shrink-0 border-l border-[#123a6e] bg-[#0a45bd]" />
      </div>
      <Recorder />
      <Taskbar />
    </div>
  );
}
